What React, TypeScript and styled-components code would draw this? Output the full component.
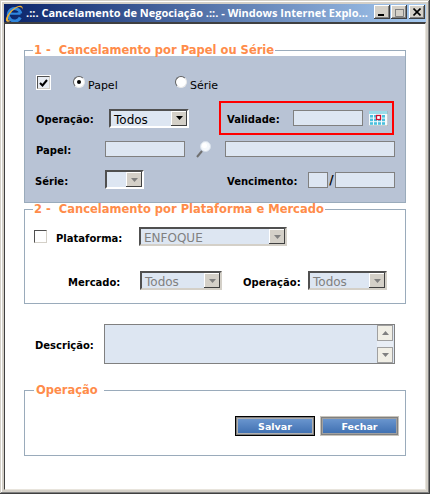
import * as React from "react"
import styled, { createGlobalStyle } from "styled-components"

const GlobalStyle = createGlobalStyle`
  html, body { margin: 0; padding: 0; background: #fff; }
  body { font-family: "DejaVu Sans", Verdana, sans-serif; }
`

const Window = styled.div`
  box-sizing: border-box;
  width: 430px;
  height: 494px;
  display: flex;
  flex-direction: column;
  padding: 4px;
  background: #d4d0c8;
  box-shadow: inset -1px -1px 0 #404040, inset 1px 1px 0 #d4d0c8, inset -2px -2px 0 #808080, inset 2px 2px 0 #fff;
`

const TitleBar = styled.div`
  height: 18px;
  display: flex;
  align-items: center;
  padding: 0 1px 0 1px;
  background: linear-gradient(to right, #0a246a, #a6caf0);
  color: #fff;
`

const TitleText = styled.div`
  flex: 1;
  margin: -1px 0 0 2px;
  font-family: "Open Sans", "DejaVu Sans", sans-serif;
  font-size: 11px;
  font-weight: 700;
  white-space: nowrap;
`

const CaptionButton = styled.div`
  box-sizing: border-box;
  width: 16px;
  height: 14px;
  margin: -2px 0 0 1px;
  display: flex;
  align-items: center;
  justify-content: center;
  background: #d4d0c8;
  box-shadow: inset -1px -1px 0 #404040, inset 1px 1px 0 #fff, inset -2px -2px 0 #808080;
  &:last-child { margin-left: 2px; }
`

const Content = styled.div`
  box-sizing: border-box;
  flex: 1;
  padding: 19px 19px 0 19px;
  background: #fff;
  border-top: 2px solid #404040;
  border-left: 1px solid #404040;
  border-right: 1px solid #e8e4dc;
  border-bottom: 1px solid #e8e4dc;
`

const Group = styled.fieldset`
  margin: 0;
  padding: 0;
  min-width: 0;
  border: 1px solid #9aabbb;
`

const Legend = styled.legend<{ $wide?: boolean }>`
  margin-left: ${(p) => (p.$wide ? 9 : 8)}px;
  padding: ${(p) => (p.$wide ? "0 6px 0 2px" : "0 1px")};
  height: 14px;
  line-height: 14px;
  font-size: 11.5px;
  font-weight: 700;
  color: #ff8c4a;
  white-space: pre;
`

const Panel = styled.div`
  height: 146px;
  box-sizing: border-box;
  padding: 20px 0 0 10px;
  margin-top: -1px;
  background: #b8c3d5;
`

const Row = styled.div<{ $top: number; $height: number; $left?: number }>`
  display: flex;
  align-items: center;
  margin-top: ${(p) => p.$top}px;
  margin-left: ${(p) => p.$left ?? 0}px;
  height: ${(p) => p.$height}px;
`

const Label = styled.span<{ $w: number; $ml?: number }>`
  flex: none;
  width: ${(p) => p.$w}px;
  margin-left: ${(p) => p.$ml ?? 0}px;
  padding-top: 3px;
  font-size: 10px;
  font-weight: 700;
  color: #000;
  white-space: nowrap;
`

const CheckBox = styled.div<{ $ml?: number; $light?: boolean }>`
  box-sizing: border-box;
  flex: none;
  width: 13px;
  height: 13px;
  margin-left: ${(p) => p.$ml ?? 0}px;
  display: flex;
  align-items: center;
  justify-content: center;
  background: ${(p) => (p.$light ? "#fff" : "#e8ecf2")};
  border: 1px solid;
  border-color: #505050 #d4d0c8 #d4d0c8 #505050;
  box-shadow: ${(p) => (p.$light ? "none" : "0 0 0 1px #fff")};
`

const Radio = styled.div<{ $on?: boolean; $ml: number }>`
  box-sizing: border-box;
  flex: none;
  align-self: flex-start;
  position: relative;
  width: 12px;
  height: 12px;
  margin-left: ${(p) => p.$ml}px;
  border-radius: 50%;
  background: #fff;
  border: 1px solid;
  border-color: #606060 #e8e8e8 #e8e8e8 #606060;
  &::after {
    content: "";
    display: ${(p) => (p.$on ? "block" : "none")};
    position: absolute;
    left: 3px;
    top: 3px;
    width: 4px;
    height: 4px;
    border-radius: 50%;
    background: #000;
  }
`

const RadioLabel = styled.span<{ $w: number }>`
  flex: none;
  width: ${(p) => p.$w}px;
  margin: 6px 0 0 3px;
  font-size: 11px;
  color: #000;
`

const Field = styled.input<{ $w: number; $ml?: number }>`
  box-sizing: border-box;
  flex: none;
  width: ${(p) => p.$w}px;
  height: 16px;
  margin: 0 0 0 ${(p) => p.$ml ?? 0}px;
  padding: 0 2px;
  background: #dde6f2;
  border: 1px solid #808080;
  border-radius: 0;
  outline: none;
`

const Select = styled.div<{ $w: number; $disabled?: boolean }>`
  box-sizing: border-box;
  flex: none;
  width: ${(p) => p.$w}px;
  height: 19px;
  display: flex;
  align-items: stretch;
  background: #dde6f2;
  border: 2px solid;
  border-color: #505050 ${(p) => (p.$disabled ? "#d4d0c8" : "#fff")} ${(p) => (p.$disabled ? "#d4d0c8" : "#fff")} #505050;
`

const SelectText = styled.span<{ $disabled?: boolean }>`
  flex: 1;
  padding: 2px 0 0 3px;
  line-height: 15px;
  font-size: 12px;
  color: ${(p) => (p.$disabled ? "#808080" : "#000")};
  white-space: nowrap;
  overflow: hidden;
`

const SelectArrow = styled.div`
  box-sizing: border-box;
  flex: none;
  width: 16px;
  display: flex;
  align-items: center;
  justify-content: center;
  background: #d4d0c8;
  box-shadow: inset -1px -1px 0 #404040, inset 1px 1px 0 #fff;
`

const Highlight = styled.div`
  box-sizing: border-box;
  flex: none;
  width: 175px;
  height: 34px;
  margin-left: 30px;
  padding-left: 6px;
  display: flex;
  align-items: center;
  border: 2px solid #ff0000;
`

const Slash = styled.span`
  flex: none;
  width: 7px;
  font-size: 12px;
  font-weight: 700;
  text-align: center;
`

const IconSlot = styled.span<{ $ml: number }>`
  flex: none;
  display: flex;
  margin-left: ${(p) => p.$ml}px;
`

const SecondGroup = styled(Group)`
  margin-top: -1px;
  padding-bottom: 13px;
`

const NoteBox = styled.div`
  box-sizing: border-box;
  flex: none;
  width: 291px;
  height: 40px;
  display: flex;
  justify-content: flex-end;
  background: #dde6f2;
  border: 1px solid #808080;
`

const ScrollTrack = styled.div`
  width: 16px;
  margin-right: 1px;
  display: flex;
  flex-direction: column;
  justify-content: space-between;
  background: #e9eef5;
`

const ScrollButton = styled.div`
  box-sizing: border-box;
  width: 16px;
  height: 16px;
  display: flex;
  align-items: center;
  justify-content: center;
  background: #f1efe6;
  border: 1px solid #a0a0a0;
`

const DescriptionRow = styled.div`
  display: flex;
  align-items: center;
  margin: 20px 0 19px 11px;
  height: 40px;
`

const Actions = styled.div`
  display: flex;
  justify-content: flex-end;
  gap: 5px;
  padding: 19px 6px 19px 0;
`

const ActionButton = styled.button<{ $primary?: boolean; $w: number }>`
  box-sizing: border-box;
  width: ${(p) => p.$w}px;
  height: 20px;
  padding: 0;
  font-family: "DejaVu Sans", sans-serif;
  font-size: 9.5px;
  font-weight: 700;
  color: #fff;
  border-radius: 0;
  background: linear-gradient(to bottom, #6f9ad2, #3b6cae);
  border: 1px solid ${(p) => (p.$primary ? "#000" : "#c8c4bc")};
  box-shadow: inset 0 0 0 1px #808080, inset 0 0 0 2px ${(p) => (p.$primary ? "#b0b0b0" : "#a0a0a0")};
`

const Arrow = ({ up, color = "#000" }: { up?: boolean; color?: string }) => (
  <svg width="7" height="4" viewBox="0 0 7 4">
    <path d={up ? "M3.5 0L7 4H0z" : "M0 0h7L3.5 4z"} fill={color} />
  </svg>
)

const IeLogo = () => (
  <svg width="19" height="19" viewBox="0 0 19 19">
    <path d="M15.300 13.500A6.300 6.300 0 1 1 15.800 9.500" fill="none" stroke="#2f86dc" strokeWidth="3" />
    <path d="M5 9.500h10.500" stroke="#2f86dc" strokeWidth="2.500" />
    <path d="M6.500 7.800h6" stroke="#0a246a" strokeWidth="1.500" />
    <path d="M1 16.500C0 13 6 5 12 2.500c3.500-1.500 6.500-1 5.500 3-.5-2.500-2.500-3-5-2C7.500 5.500 2.500 12 3 15.500c.2 1 1 1.300 2.500 1C4 18.500 1.500 18 1 16.500z" fill="#f0b030" />
  </svg>
)

const Calendar = () => (
  <svg width="19" height="15" viewBox="0 0 19 15">
    <rect width="19" height="15" fill="#f4fbfd" />
    <rect width="19" height="3" fill="#9bdcea" />
    {[0, 1, 2].map((r) =>
      [1, 5, 9, 13].map((c) => <rect key={`${r}-${c}`} x={c} y={4 + r * 3.6} width="3" height="2.600" fill="#4cc0de" />)
    )}
    <rect x="7.500" y="4.500" width="4" height="4" fill="#fff" stroke="#d01030" strokeWidth="1.300" />
    <path d="M19 0v15H0" fill="none" stroke="#a0a0a0" strokeWidth="1" />
  </svg>
)

const Magnifier = () => (
  <svg width="15" height="17" viewBox="0 0 15 17">
    <path d="M1 16l5-6" stroke="#707070" strokeWidth="2" />
    <circle cx="9.500" cy="5.500" r="5" fill="#f4f8fc" stroke="#d8e0ea" />
    <circle cx="8.500" cy="4.500" r="2.500" fill="#ffffff" />
  </svg>
)

const Combo = ({ text, w, disabled, dimArrow }: { text?: string; w: number; disabled?: boolean; dimArrow?: boolean }) => (
  <Select $w={w} $disabled={disabled}>
    <SelectText $disabled={disabled}>{text}</SelectText>
    <SelectArrow>
      <Arrow color={disabled || dimArrow ? "#808080" : "#000"} />
    </SelectArrow>
  </Select>
)

export default function App() {
  return (
    <>
      <GlobalStyle />
      <Window>
        <TitleBar>
          <IeLogo />
          <TitleText>.::. Cancelamento de Negociação .::. - Windows Internet Explo...</TitleText>
          <CaptionButton>
            <svg width="8" height="8" viewBox="0 0 8 8"><rect x="0" y="6" width="6" height="2" fill="#000" /></svg>
          </CaptionButton>
          <CaptionButton>
            <svg width="9" height="9" viewBox="0 0 9 9"><path d="M.5 1.500h8v7h-8z" fill="none" stroke="#808080" /><path d="M0 1h9v1H0z" fill="#808080" /></svg>
          </CaptionButton>
          <CaptionButton>
            <svg width="8" height="8" viewBox="0 0 8 8"><path d="M.5.500l7 7M7.500.500l-7 7" stroke="#000" strokeWidth="1.600" /></svg>
          </CaptionButton>
        </TitleBar>
        <Content>
          <Group>
            <Legend>{"1 -  Cancelamento por Papel ou Série"}</Legend>
            <Panel>
              <Row $top={0} $height={13} $left={2}>
                <CheckBox>
                  <svg width="9" height="8" viewBox="0 0 9 8"><path d="M1 4l2.500 2.500L8 1" fill="none" stroke="#000" strokeWidth="2" /></svg>
                </CheckBox>
                <Radio $on $ml={23} />
                <RadioLabel $w={87}>Papel</RadioLabel>
                <Radio $ml={0} />
                <RadioLabel $w={40}>Série</RadioLabel>
              </Row>
              <Row $top={12} $height={34} $left={1}>
                <Label $w={73}>Operação:</Label>
                <Combo text="Todos" w={80} />
                <Highlight>
                  <Label $w={66}>Validade:</Label>
                  <Field $w={70} />
                  <IconSlot $ml={6}><Calendar /></IconSlot>
                </Highlight>
              </Row>
              <Row $top={6} $height={16}>
                <Label $w={70} $ml={1}>Papel:</Label>
                <Field $w={80} $ml={-1} />
                <IconSlot $ml={11}><Magnifier /></IconSlot>
                <Field $w={170} $ml={14} />
              </Row>
              <Row $top={13} $height={19}>
                <Label $w={70}>Série:</Label>
                <Combo w={39} dimArrow />
                <Label $w={81} $ml={83}>Vencimento:</Label>
                <Field $w={20} />
                <Slash>/</Slash>
                <Field $w={60} />
              </Row>
            </Panel>
          </Group>
          <SecondGroup>
            <Legend>{"2 -  Cancelamento por Plataforma e Mercado"}</Legend>
            <Row $top={11} $height={19} $left={9}>
              <CheckBox $light />
              <Label $w={83} $ml={9}>Plataforma:</Label>
              <Combo text="ENFOQUE" w={148} disabled />
            </Row>
            <Row $top={25} $height={19} $left={43}>
              <Label $w={72}>Mercado:</Label>
              <Combo text="Todos" w={82} disabled />
              <Label $w={65} $ml={21}>Operação:</Label>
              <Combo text="Todos" w={79} disabled />
            </Row>
          </SecondGroup>
          <DescriptionRow>
            <Label $w={69}>Descrição:</Label>
            <NoteBox>
              <ScrollTrack>
                <ScrollButton><Arrow up color="#808080" /></ScrollButton>
                <ScrollButton><Arrow color="#808080" /></ScrollButton>
              </ScrollTrack>
            </NoteBox>
          </DescriptionRow>
          <Group>
            <Legend $wide>Operação</Legend>
            <Actions>
              <ActionButton $primary $w={80}>Salvar</ActionButton>
              <ActionButton $w={79}>Fechar</ActionButton>
            </Actions>
          </Group>
        </Content>
      </Window>
    </>
  )
}
